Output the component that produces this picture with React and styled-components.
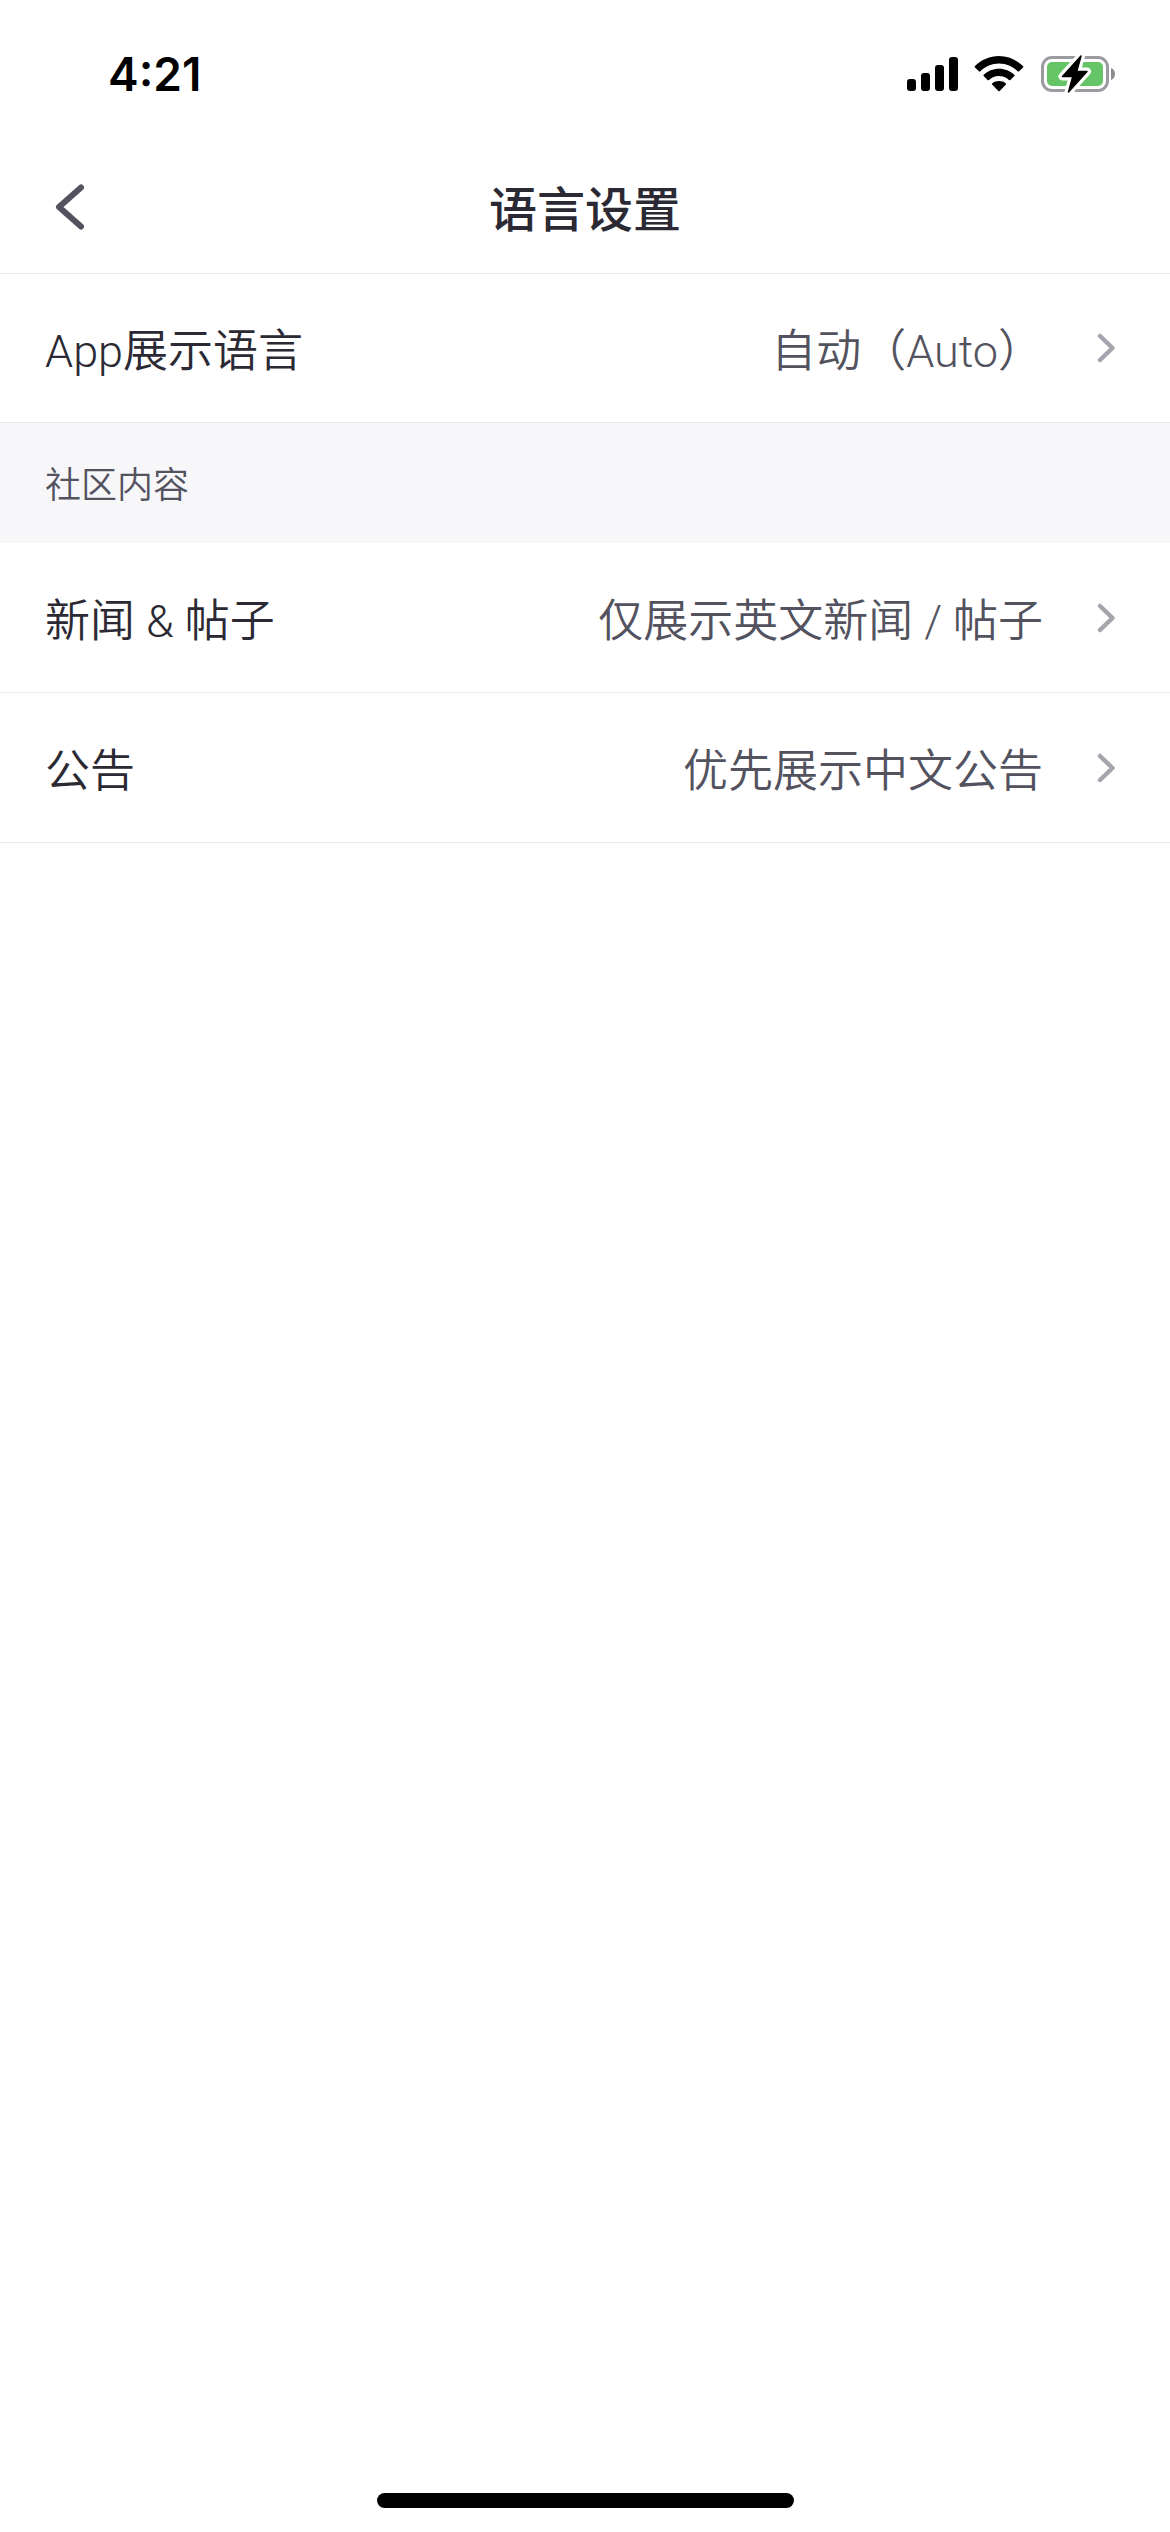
import React from "react";
import styled, { createGlobalStyle } from "styled-components";

const color = {
  ink: "#2b2a34",
  muted: "#53525f",
  chevron: "#a6a5ae",
  line: "#e9e9eb",
  band: "#f7f7fa",
};

const GlobalStyle = createGlobalStyle`
  *, *::before, *::after { box-sizing: border-box; }
  body {
    margin: 0;
    background: #fff;
    font-family: Roboto, "Noto Sans CJK SC", sans-serif;
    color: ${color.ink};
  }
`;

const Screen = styled.div`
  display: flex;
  flex-direction: column;
  min-height: 100vh;
`;

const StatusBar = styled.div`
  display: flex;
  align-items: center;
  justify-content: space-between;
  height: 148px;
  padding: 0 54px 0 108px;
`;

const Clock = styled.time`
  font: 600 46px/56px Inter, sans-serif;
  color: #000;
`;

const StatusIcons = styled.div`
  display: flex;
  align-items: center;
  gap: 16px;

  svg { display: block; }
`;

const NavBar = styled.header`
  display: grid;
  grid-template-columns: 140px 1fr 140px;
  align-items: center;
  height: 126px;
  border-bottom: 1px solid ${color.line};
`;

const BackButton = styled.button`
  display: flex;
  align-items: center;
  height: 100%;
  padding: 0 0 8px 54px;
  border: 0;
  background: none;
  color: ${color.muted};
  cursor: pointer;
`;

const Title = styled.h1`
  margin: 0;
  font-size: 48px;
  line-height: 60px;
  font-weight: 500;
  text-align: center;
`;

const Row = styled.button`
  display: flex;
  align-items: center;
  width: 100%;
  height: ${(p) => (p.$first ? 149 : 150)}px;
  padding: 0 54px 0 45px;
  border: 0;
  border-bottom: 1px solid ${color.line};
  background: none;
  color: ${color.ink};
  font-family: inherit;
  font-size: 45px;
  font-weight: 350;
  line-height: 60px;
  text-align: left;
  cursor: pointer;
`;

const Label = styled.span`
  flex: 1;
  padding-top: 8px;
`;

const Value = styled.span`
  margin-right: 53px;
  padding-top: 8px;
  color: ${color.muted};
`;

const SectionTitle = styled.h2`
  margin: 0;
  padding: 39px 45px 33px;
  background: ${color.band};
  color: ${color.muted};
  font-size: 36px;
  line-height: 48px;
  font-weight: 350;
`;

const HomeIndicator = styled.div`
  align-self: center;
  width: 417px;
  max-width: 60%;
  height: 15px;
  margin: auto 0 24px;
  border-radius: 8px;
  background: #000;
`;

function SignalIcon() {
  return (
    <svg width="51" height="36" viewBox="0 0 51 36" aria-hidden="true">
      <rect x="0" y="23" width="9" height="12" rx="3" />
      <rect x="14" y="17" width="9" height="18" rx="3" />
      <rect x="28" y="9" width="9" height="26" rx="3" />
      <rect x="42" y="1" width="9" height="34" rx="3" />
    </svg>
  );
}

function WifiIcon() {
  return (
    <svg width="50" height="36" viewBox="0 0 50 36" aria-hidden="true">
      <path d="M1 11.4a1 1 0 0 1 0-1.4C7.500 3.700 15.800 0 25 0s17.500 3.700 24 10a1 1 0 0 1 0 1.400l-3.900 3.900a1 1 0 0 1-1.400 0C38.700 10.500 32.200 7.600 25 7.600S11.300 10.500 6.300 15.300a1 1 0 0 1-1.400 0z" />
      <path d="M9.700 20.100a1 1 0 0 1 0-1.400C13.700 15 19.100 12.700 25 12.700s11.300 2.300 15.300 6a1 1 0 0 1 0 1.400l-3.900 3.900a1 1 0 0 1-1.400 0C32.300 21.600 28.800 20.100 25 20.100s-7.300 1.500-10 3.900a1 1 0 0 1-1.400 0z" />
      <path d="M18.300 28.700a1 1 0 0 1 0-1.400C20.100 25.900 22.400 25.100 25 25.100s4.900.8 6.700 2.200a1 1 0 0 1 0 1.400L25.700 34.900a1 1 0 0 1-1.400 0z" />
    </svg>
  );
}

function BatteryIcon() {
  const bolt = "M40 0 21.500 20.500h10.300L27.500 36 46 15.500H35.700z";
  return (
    <svg width="76" height="38" viewBox="0 0 76 38" aria-hidden="true">
      <rect x="2.500" y="2.500" width="65" height="33" rx="9.500" fill="none" stroke="#9c9ba1" strokeWidth="3" />
      <path d="M71 13c2.600 1 4 3.300 4 6s-1.400 5-4 6z" fill="#8c8b90" />
      <rect x="7" y="7" width="56" height="24" rx="5" fill="#65c466" />
      <g transform="translate(1 1)">
        <path d={bolt} fill="#fff" stroke="#fff" strokeWidth="8" strokeLinejoin="round" />
        <path d={bolt} fill="#000" stroke="#000" strokeWidth="1.500" strokeLinejoin="round" />
      </g>
    </svg>
  );
}

function BackIcon() {
  return (
    <svg width="32" height="48" viewBox="0 0 32 48" fill="none" stroke="currentColor" strokeWidth="6" strokeLinecap="round" strokeLinejoin="round" aria-hidden="true">
      <path d="M27 4.500 5 24l22 19.500" />
    </svg>
  );
}

function ChevronIcon() {
  return (
    <svg width="20" height="32" viewBox="0 0 20 32" fill="none" stroke={color.chevron} strokeWidth="4.500" strokeLinecap="round" strokeLinejoin="round" aria-hidden="true">
      <path d="M4 4l12.500 12L4 28" />
    </svg>
  );
}

function SettingRow({ label, value, first }) {
  return (
    <Row type="button" $first={first}>
      <Label>{label}</Label>
      <Value>{value}</Value>
      <ChevronIcon />
    </Row>
  );
}

export default function App() {
  return (
    <Screen lang="zh-CN">
      <GlobalStyle />
      <StatusBar>
        <Clock>4:21</Clock>
        <StatusIcons>
          <SignalIcon />
          <WifiIcon />
          <BatteryIcon />
        </StatusIcons>
      </StatusBar>
      <NavBar>
        <BackButton type="button" aria-label="返回">
          <BackIcon />
        </BackButton>
        <Title>语言设置</Title>
      </NavBar>
      <main>
        <SettingRow label="App展示语言" value="自动（Auto）" first />
        <SectionTitle>社区内容</SectionTitle>
        <SettingRow label="新闻 & 帖子" value="仅展示英文新闻 / 帖子" />
        <SettingRow label="公告" value="优先展示中文公告" />
      </main>
      <HomeIndicator />
    </Screen>
  );
}
